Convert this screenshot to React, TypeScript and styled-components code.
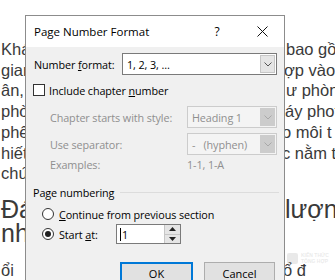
import React from 'react';
import styled, { createGlobalStyle } from 'styled-components';

const GlobalStyle = createGlobalStyle`
  html, body {
    margin: 0;
    padding: 0;
    background: #ffffff;
  }
  body {
    width: 335px;
    height: 280px;
    overflow: hidden;
  }
`;

const Page = styled.div`
  position: relative;
  width: 335px;
  height: 280px;
  overflow: hidden;
  box-sizing: border-box;
  padding-top: 39px;
  font-family: 'Liberation Sans', Arial, sans-serif;
  color: #3a3a3a;
`;

const TextLine = styled.div<{ $size?: number; $height?: number; $top?: number }>`
  display: grid;
  grid-template-columns: 285px 1fr;
  font-size: ${p => p.$size ?? 16.5}px;
  line-height: ${p => p.$height ?? 20.7}px;
  margin-top: ${p => p.$top ?? 0}px;
  white-space: nowrap;
`;

const Cell = styled.span<{ $shift?: number }>`
  overflow: hidden;
  padding-left: 1px;
  margin-left: ${p => p.$shift ?? 0}px;
`;

const Watermark = styled.div`
  position: absolute;
  left: 287px;
  top: 252px;
  display: flex;
  align-items: center;
  gap: 3px;
  opacity: 0.12;
  font-family: 'Liberation Sans', Arial, sans-serif;
  font-size: 5px;
  font-weight: bold;
  line-height: 6px;
  color: #555;
`;

const MarkBox = styled.div`
  width: 11px;
  height: 11px;
  background: #555;
  border-radius: 2px;
`;

const Dialog = styled.div`
  position: absolute;
  left: 25px;
  top: 15px;
  width: 260px;
  height: 290px;
  box-sizing: border-box;
  border: 1px solid #8c8c8c;
  background: #f0f0f0;
  font-family: 'Open Sans', 'Noto Sans', sans-serif;
  font-size: 10.8px;
  letter-spacing: -0.1px;
  color: #000;
  display: flex;
  flex-direction: column;
`;

const TitleBar = styled.div`
  height: 31px;
  background: #ffffff;
  display: flex;
  align-items: center;
  padding-left: 8px;
  font-size: 11.5px;
  letter-spacing: 0;
`;

const Title = styled.span`
  flex: 1;
`;

const TitleButton = styled.span<{ $width: number }>`
  width: ${p => p.$width}px;
  display: flex;
  justify-content: center;
  align-items: center;
  font-size: 12px;
`;

const Body = styled.div`
  flex: 1;
  padding: 6px 7px 0 8px;
  display: flex;
  flex-direction: column;
`;

const FieldRow = styled.div<{ $label: number; $indent?: number; $top?: number }>`
  display: grid;
  grid-template-columns: ${p => p.$label}px 1fr;
  align-items: center;
  height: 22px;
  padding-left: ${p => p.$indent ?? 0}px;
  margin-top: ${p => p.$top ?? 0}px;
`;

const Label = styled.span<{ $disabled?: boolean }>`
  color: ${p => (p.$disabled ? '#8f8f8f' : '#000')};
  white-space: nowrap;
`;

const Select = styled.div<{ $disabled?: boolean }>`
  height: 22px;
  box-sizing: border-box;
  border: 1px solid ${p => (p.$disabled ? '#cccccc' : '#7a7a7a')};
  background: ${p => (p.$disabled ? '#f4f4f4' : '#ffffff')};
  color: ${p => (p.$disabled ? '#8f8f8f' : '#000')};
  display: flex;
  align-items: center;
  padding-left: 4px;
  white-space: pre;
`;

const SelectText = styled.span`
  flex: 1;
`;

const ArrowBox = styled.span<{ $disabled?: boolean }>`
  width: 15px;
  height: 18px;
  margin-right: 1px;
  box-sizing: border-box;
  background: ${p => (p.$disabled ? '#cccccc' : '#e5e5e5')};
  border: 1px solid ${p => (p.$disabled ? '#cccccc' : '#c6c6c6')};
  display: flex;
  align-items: center;
  justify-content: center;
`;

const CheckRow = styled.label`
  display: flex;
  align-items: center;
  gap: 4px;
  margin-top: 8px;
  margin-left: -1px;
  height: 14px;
`;

const CheckBox = styled.span`
  width: 12px;
  height: 12px;
  box-sizing: border-box;
  border: 1px solid #333;
  background: #fff;
`;

const Underline = styled.span`
  text-decoration: underline;
`;

const ExampleRow = styled.div`
  display: grid;
  grid-template-columns: 137px 1fr;
  padding-left: 16px;
  height: 16px;
  align-items: center;
  margin-top: 1px;
  color: #8f8f8f;
`;

const GroupHeader = styled.div`
  display: flex;
  align-items: center;
  gap: 6px;
  height: 16px;
  margin-top: 12px;
  margin-left: -1px;
  margin-right: -2px;
`;

const GroupLine = styled.span`
  flex: 1;
  height: 1px;
  background: #dcdcdc;
`;

const RadioRow = styled.label<{ $top: number }>`
  display: flex;
  align-items: center;
  gap: 5px;
  margin-left: 8px;
  margin-top: ${p => p.$top}px;
  height: 16px;
`;

const Radio = styled.span<{ $checked?: boolean }>`
  width: 12px;
  height: 12px;
  box-sizing: border-box;
  border-radius: 50%;
  border: 1px solid #333;
  background: #fff;
  display: flex;
  align-items: center;
  justify-content: center;
  &::after {
    content: '';
    width: 6px;
    height: 6px;
    border-radius: 50%;
    background: ${p => (p.$checked ? '#222' : 'transparent')};
  }
`;

const StartLabel = styled.span`
  width: 52px;
  white-space: nowrap;
`;

const Spin = styled.div`
  display: flex;
  height: 20px;
  width: 65px;
  box-sizing: border-box;
  border: 1px solid #7a7a7a;
  background: #fff;
`;

const SpinValue = styled.span`
  flex: 1;
  display: flex;
  align-items: center;
  padding-left: 3px;
`;

const Caret = styled.span`
  width: 1px;
  height: 13px;
  background: #000;
  margin-right: 1px;
`;

const SpinButtons = styled.div`
  width: 15px;
  display: flex;
  flex-direction: column;
  border-left: 1px solid #c6c6c6;
  background: #e5e5e5;
`;

const SpinButton = styled.span`
  flex: 1;
  display: flex;
  align-items: center;
  justify-content: center;
  & + & {
    border-top: 1px solid #c6c6c6;
  }
`;

const ButtonRow = styled.div`
  display: flex;
  gap: 11px;
  margin-top: 20px;
  padding-left: 86px;
`;

const Button = styled.button<{ $primary?: boolean }>`
  width: ${p => (p.$primary ? 73 : 71)}px;
  height: 22px;
  box-sizing: border-box;
  border: ${p => (p.$primary ? '2px solid #0078d7' : '1px solid #adadad')};
  background: #e1e1e1;
  font-family: 'Open Sans', 'Noto Sans', sans-serif;
  font-size: 11px;
  padding: 0;
  color: #000;
`;

const Chevron = ({ color }: { color: string }) => (
  <svg width="8" height="5" viewBox="0 0 8 5">
    <path d="M0.5 0.5 L4 4 L7.5 0.5" fill="none" stroke={color} strokeWidth="1" />
  </svg>
);

const Tri = ({ up }: { up?: boolean }) => (
  <svg width="7" height="4" viewBox="0 0 7 4">
    <path d={up ? 'M0 4 L3.5 0 L7 4 Z' : 'M0 0 L3.5 4 L7 0 Z'} fill="#222" />
  </svg>
);

const lines: [string, string, number?][] = [
  ['Khách hàng', 'bao gồm'],
  ['gian', 'ợp vào', -2],
  ['ân,', 'ư phòng'],
  ['phòng', 'áy phot', -1],
  ['phê', 'o môi t', -4],
  ['hiết', 'c nằm t', -4],
  ['chứ', ''],
];

const App = () => (
  <>
    <GlobalStyle />
    <Page>
      {lines.map(([left, right, shift]) => (
        <TextLine key={left}>
          <Cell>{left}</Cell>
          <Cell $shift={shift}>{right}</Cell>
        </TextLine>
      ))}
      <TextLine $size={25} $height={24} $top={13}>
        <Cell>Đánh giá</Cell>
        <Cell $shift={-1}>lượng</Cell>
      </TextLine>
      <TextLine $size={25} $height={24}>
        <Cell>nhu cầu</Cell>
        <Cell />
      </TextLine>
      <TextLine $top={15}>
        <Cell>ổi</Cell>
        <Cell $shift={-3}>ổ đ</Cell>
      </TextLine>
      <Watermark>
        <MarkBox />
        <span>
          KIẾN THỨC
          <br />
          TỔNG HỢP
        </span>
      </Watermark>

      <Dialog>
        <TitleBar>
          <Title>Page Number Format</Title>
          <TitleButton $width={46}>?</TitleButton>
          <TitleButton $width={44}>
            <svg width="11" height="11" viewBox="0 0 11 11">
              <path d="M0.5 0.5 L10.5 10.5 M10.5 0.5 L0.5 10.5" stroke="#111" strokeWidth="1" />
            </svg>
          </TitleButton>
        </TitleBar>
        <Body>
          <FieldRow $label={88}>
            <Label>
              Number <Underline>f</Underline>ormat:
            </Label>
            <Select>
              <SelectText>1, 2, 3, …</SelectText>
              <ArrowBox>
                <Chevron color="#555" />
              </ArrowBox>
            </Select>
          </FieldRow>
          <CheckRow>
            <CheckBox />
            <Label>
              Include chapter <Underline>n</Underline>umber
            </Label>
          </CheckRow>
          <FieldRow $label={137} $indent={16} $top={9}>
            <Label $disabled>Chapter starts with style:</Label>
            <Select $disabled>
              <SelectText>Heading 1</SelectText>
              <ArrowBox $disabled>
                <Chevron color="#a8a8a8" />
              </ArrowBox>
            </Select>
          </FieldRow>
          <FieldRow $label={137} $indent={16} $top={5}>
            <Label $disabled>Use separator:</Label>
            <Select $disabled>
              <SelectText>-   (hyphen)</SelectText>
              <ArrowBox $disabled>
                <Chevron color="#a8a8a8" />
              </ArrowBox>
            </Select>
          </FieldRow>
          <ExampleRow>
            <span>Examples:</span>
            <span>1-1, 1-A</span>
          </ExampleRow>
          <GroupHeader>
            <span>Page numbering</span>
            <GroupLine />
          </GroupHeader>
          <RadioRow $top={6}>
            <Radio />
            <span>
              <Underline>C</Underline>ontinue from previous section
            </span>
          </RadioRow>
          <RadioRow $top={4}>
            <Radio $checked />
            <StartLabel>
              Start <Underline>a</Underline>t:
            </StartLabel>
            <Spin>
              <SpinValue>
                <Caret />1
              </SpinValue>
              <SpinButtons>
                <SpinButton>
                  <Tri up />
                </SpinButton>
                <SpinButton>
                  <Tri />
                </SpinButton>
              </SpinButtons>
            </Spin>
          </RadioRow>
          <ButtonRow>
            <Button $primary>OK</Button>
            <Button>Cancel</Button>
          </ButtonRow>
        </Body>
      </Dialog>
    </Page>
  </>
);

export default App;
